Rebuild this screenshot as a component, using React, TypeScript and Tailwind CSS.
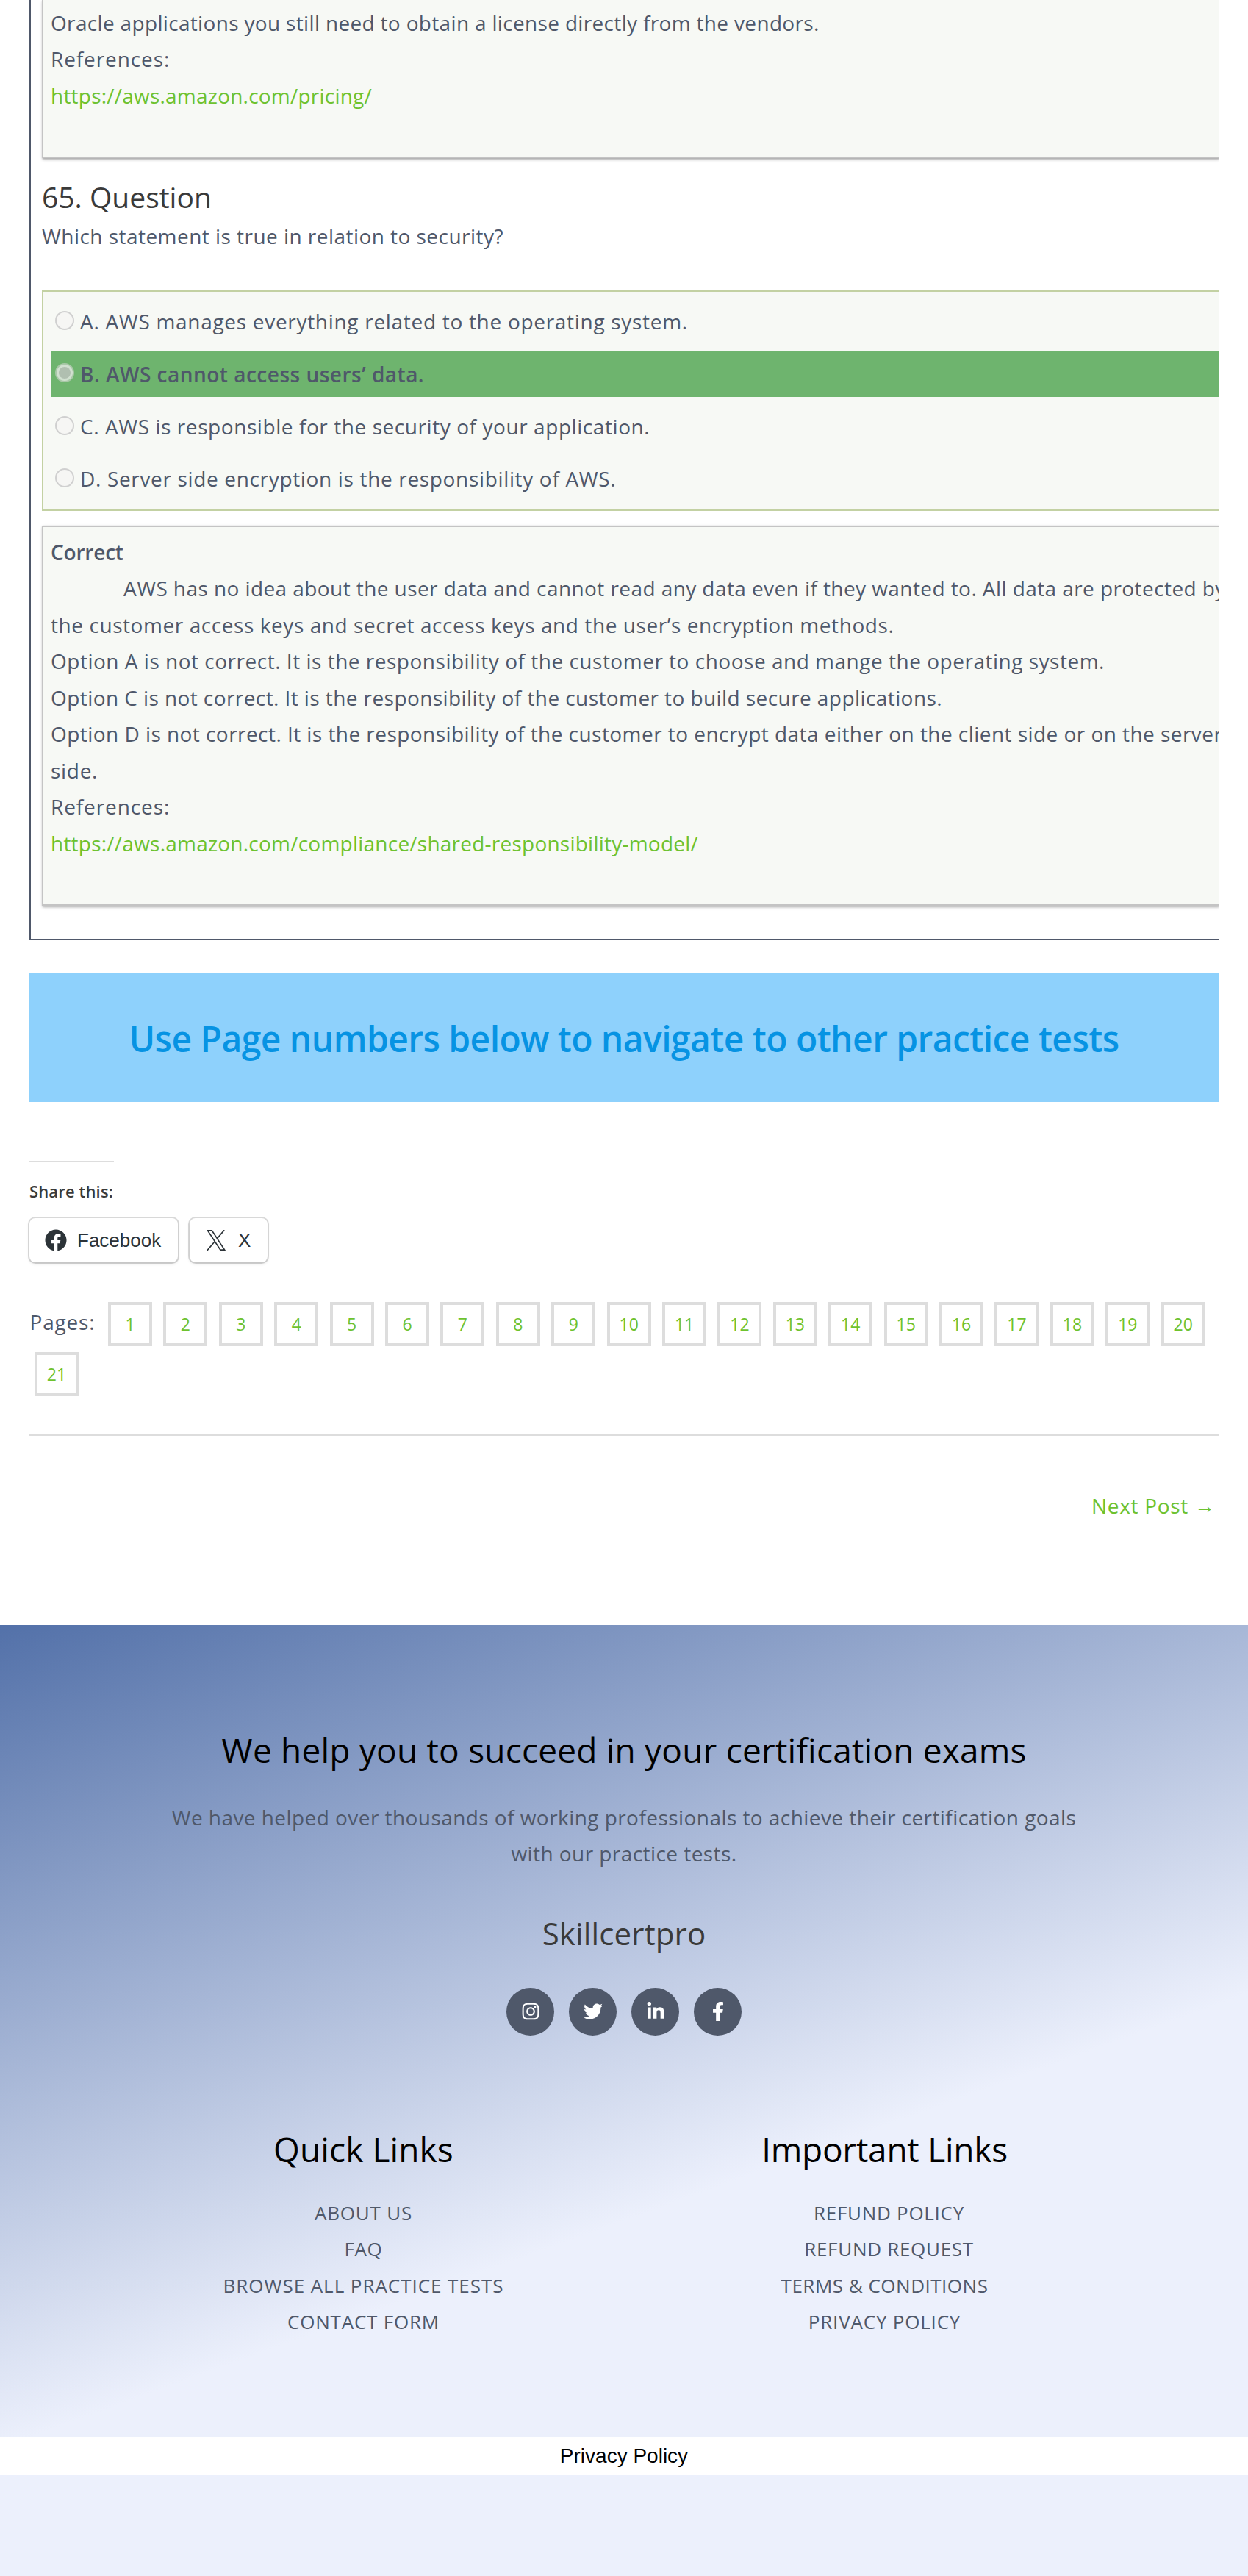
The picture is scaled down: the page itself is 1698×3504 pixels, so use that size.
import type { ReactNode } from "react";
import { FaFacebook, FaFacebookF, FaInstagram, FaLinkedinIn, FaTwitter } from "react-icons/fa";

function Line({ className = "", children }: { className?: string; children: ReactNode }) {
  return <p className={`whitespace-nowrap ${className}`}>{children}</p>;
}

function Option({ checked, className = "", children }: { checked?: boolean; className?: string; children: ReactNode }) {
  return (
    <li className={`flex h-[62px] shrink-0 pl-[6px] ${checked ? "bg-[#6eb46e]" : ""}`}>
      {checked ? (
        <span className="mt-4 flex size-[26px] shrink-0 items-center justify-center rounded-full border-2 border-[#a9c8a8] bg-[#d1e0d0]">
          <span className="size-4 rounded-full bg-[#b0bfb0]" />
        </span>
      ) : (
        <span className="mt-4 size-[26px] shrink-0 rounded-full border-2 border-[#d0d0d0] bg-[#f6f6f4]" />
      )}
      <span className={`ml-2 mt-[6.5px] whitespace-nowrap ${className}`}>{children}</span>
    </li>
  );
}

const socialIcons = [FaInstagram, FaTwitter, FaLinkedinIn, FaFacebookF];

const pages = Array.from({ length: 21 }, (_, i) => i + 1);

const quickLinks = [
  { label: "ABOUT US", spacing: "tracking-[0.8px]" },
  { label: "FAQ", spacing: "tracking-[0.6px]" },
  { label: "BROWSE ALL PRACTICE TESTS", spacing: "tracking-[0.95px]" },
  { label: "CONTACT FORM", spacing: "tracking-[0.8px]" },
];

const importantLinks = [
  { label: "REFUND POLICY", spacing: "pl-[12px] tracking-[0.7px]" },
  { label: "REFUND REQUEST", spacing: "pl-[12px] tracking-[0.7px]" },
  { label: "TERMS & CONDITIONS", spacing: "tracking-[0.5px]" },
  { label: "PRIVACY POLICY", spacing: "tracking-[0.8px]" },
];

function LinkColumn({ title, spacing, links }: { title: string; spacing: string; links: { label: string; spacing: string }[] }) {
  return (
    <div className="w-[709px] text-center">
      <h2 className={`text-[46px] leading-[60px] text-black ${spacing}`}>{title}</h2>
      <ul className="mt-[33px] text-[26px] leading-[49.5px]">
        {links.map((l) => (
          <li key={l.label} className={l.spacing}>{l.label}</li>
        ))}
      </ul>
    </div>
  );
}

const messageBox =
  "border-l-2 border-b-2 border-[#c4c4c4] bg-[#f7f9f5] pl-[10px] shadow-[1px_1px_2px_#aaa,1px_2px_4px_#bbb]";

export default function App() {
  return (
    <div className="h-[3504px] w-[1698px] overflow-hidden bg-white font-['Open_Sans',sans-serif] text-[28px] leading-[49.5px] text-[#4f586a]">
      <main className="h-[2211px] px-10">
        <section className="h-[1279px] overflow-hidden border-b-2 border-l-2 border-[#4f586a] pl-[15px]">
          <div className={`${messageBox} h-[215px] pt-[6.5px]`}>
            <Line className="tracking-[0.33px]">
              Oracle applications you still need to obtain a license directly from the vendors.
            </Line>
            <Line className="tracking-[0.9px]">References:</Line>
            <Line className="tracking-[0.22px] text-[#6ec22e]">https://aws.amazon.com/pricing/</Line>
          </div>

          <h3 className="mt-[33.4px] text-[39px] leading-[40px] text-[#3a3a3a]">65. Question</h3>
          <Line className="mt-[8.6px] tracking-[0.46px]">Which statement is true in relation to security?</Line>

          <ul className="mt-[48.5px] flex h-[300px] flex-col gap-[9.33px] border-y-2 border-l-2 border-[#c3d1a3] bg-[#f7f9f5] py-[10px] pl-[10px]">
            <Option className="tracking-[0.7px]">A. AWS manages everything related to the operating system.</Option>
            <Option checked className="font-semibold tracking-[0.5px]">B. AWS cannot access users’ data.</Option>
            <Option className="tracking-[0.57px]">C. AWS is responsible for the security of your application.</Option>
            <Option className="tracking-[0.66px]">D. Server side encryption is the responsibility of AWS.</Option>
          </ul>

          <div className={`${messageBox} mt-5 h-[517px] border-t-2 pt-[10px]`}>
            <Line className="font-semibold tracking-[-0.2px]">Correct</Line>
            <Line className="pl-[99px] tracking-[0.42px]">
              AWS has no idea about the user data and cannot read any data even if they wanted to. All data are protected by
            </Line>
            <Line className="tracking-[0.57px]">
              the customer access keys and secret access keys and the user’s encryption methods.
            </Line>
            <Line className="tracking-[0.51px]">
              Option A is not correct. It is the responsibility of the customer to choose and mange the operating system.
            </Line>
            <Line className="tracking-[0.42px]">
              Option C is not correct. It is the responsibility of the customer to build secure applications.
            </Line>
            <Line className="tracking-[0.45px]">
              Option D is not correct. It is the responsibility of the customer to encrypt data either on the client side or on the server
            </Line>
            <Line className="tracking-[0.7px]">side.</Line>
            <Line className="tracking-[0.9px]">References:</Line>
            <Line className="tracking-[0.23px] text-[#6ec22e]">
              https://aws.amazon.com/compliance/shared-responsibility-model/
            </Line>
          </div>
        </section>

        <div className="mt-[45px] h-[175px] bg-[#8ed1fc] text-center text-[48px] font-semibold leading-[177px] tracking-[-0.55px] text-[#0693e3]">
          Use Page numbers below to navigate to other practice tests
        </div>

        <div className="mt-20 h-[2px] w-[115px] bg-[#ddd]" />
        <h3 className="mt-[23.5px] text-[22px] font-semibold leading-[30px] tracking-[0.15px] text-[#3a3a3a]">Share this:</h3>

        <div className="mt-[22.5px] flex gap-4 font-['Liberation_Sans',sans-serif] text-[26px] leading-[60px] text-[#2c3338]">
          <span className="flex h-[60px] w-[202px] items-center rounded-[8px] pl-[21px] shadow-[0_0_0_2px_rgba(0,0,0,0.14),0_2px_4px_rgba(0,0,0,0.12)]">
            <FaFacebook className="mr-[14px] size-[30px]" />
            Facebook
          </span>
          <span className="flex h-[60px] w-[106px] items-center rounded-[8px] pl-[23px] shadow-[0_0_0_2px_rgba(0,0,0,0.14),0_2px_4px_rgba(0,0,0,0.12)]">
            <svg viewBox="0 0 26 28" className="mr-[17px] h-7 w-[26px]" fill="none" stroke="currentColor" strokeWidth="1.7">
              <path d="M1.6 .9H7.3L24.6 27.1H18.9ZM24.2 .2 14.4 11.8M11 16 .9 27.8" />
            </svg>
            X
          </span>
        </div>

        <div className="mt-[54px] flex">
          <div className="flex w-[1620px] flex-wrap gap-x-[15.42px] gap-y-2 pl-[0.5px]">
            <span className="mr-[1.08px] w-[90px] pt-[3px] tracking-[0.8px]">Pages:</span>
            {pages.map((n) => (
              <span
                key={n}
                className={`h-[60px] w-[60px] border-4 border-[#ddd] text-center text-[23px] leading-[53px] text-[#6ec22e] ${n === 21 ? "ml-[6.5px]" : ""}`}
              >
                {n}
              </span>
            ))}
          </div>
        </div>

        <div className="mt-[52px] h-[2px] bg-[#ddd]" />
        <div className="mt-[71.4px] flex justify-end pr-[5px] text-[#6ec22e]">
          <span className="tracking-[0.7px]">Next Post</span>
          <span className="ml-2 font-['Liberation_Sans',sans-serif] font-bold">→</span>
        </div>
      </main>

      <footer className="h-[1104px] bg-[linear-gradient(160deg,#5371a9_0%,#ecf0fc_65%)] pt-[138.7px]">
        <h2 className="text-center text-[46px] leading-[60px] tracking-[0.2px] text-black">
          We help you to succeed in your certification exams
        </h2>
        <div className="mt-[38.3px] text-center tracking-[0.44px]">
          <Line>We have helped over thousands of working professionals to achieve their certification goals</Line>
          <Line>with our practice tests.</Line>
        </div>
        <h2 className="mt-[53.3px] text-center text-[42px] leading-[60px] tracking-[0.15px] text-[#3a3a3a]">Skillcertpro</h2>
        <div className="mt-[43.7px] flex justify-center gap-5">
          {socialIcons.map((Icon, i) => (
            <span key={i} className="flex size-[65px] items-center justify-center rounded-full bg-[#4f586a] text-white">
              <Icon className="size-[26px]" />
            </span>
          ))}
        </div>
        <div className="mt-[123.9px] flex justify-center">
          <LinkColumn title="Quick Links" spacing="tracking-[0.1px]" links={quickLinks} />
          <LinkColumn title="Important Links" spacing="tracking-[-0.25px]" links={importantLinks} />
        </div>
      </footer>

      <div className="h-[51px] bg-white text-center font-['Liberation_Sans',sans-serif] text-[28px] leading-[51px] text-black">
        Privacy Policy
      </div>
      <div className="h-[138px] bg-[#ecf0fc]" />
    </div>
  );
}
